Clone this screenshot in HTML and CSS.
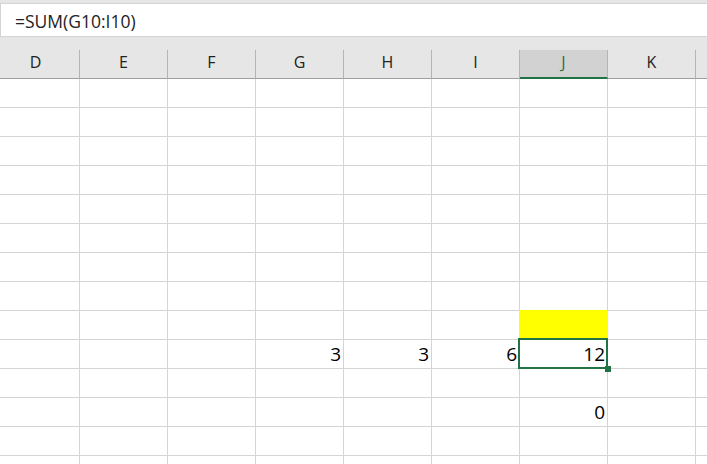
FILE: index.html
```html
<!DOCTYPE html>
<html lang="en">
<head>
    <meta charset="UTF-8">
    <title>Sheet</title>
    <link rel="stylesheet" href="styles.css">
</head>
<body>
    <div class="formula-bar">
        <div class="formula-input">=SUM(G10:I10)</div>
    </div>

    <div class="sheet">
        <div class="col-head">D</div>
        <div class="col-head">E</div>
        <div class="col-head">F</div>
        <div class="col-head">G</div>
        <div class="col-head">H</div>
        <div class="col-head">I</div>
        <div class="col-head active">J</div>
        <div class="col-head">K</div>
        <div class="col-head"></div>

        <!-- rows 1-8 -->
        <div class="cell"></div><div class="cell"></div><div class="cell"></div><div class="cell"></div><div class="cell"></div><div class="cell"></div><div class="cell"></div><div class="cell"></div><div class="cell"></div>
        <div class="cell"></div><div class="cell"></div><div class="cell"></div><div class="cell"></div><div class="cell"></div><div class="cell"></div><div class="cell"></div><div class="cell"></div><div class="cell"></div>
        <div class="cell"></div><div class="cell"></div><div class="cell"></div><div class="cell"></div><div class="cell"></div><div class="cell"></div><div class="cell"></div><div class="cell"></div><div class="cell"></div>
        <div class="cell"></div><div class="cell"></div><div class="cell"></div><div class="cell"></div><div class="cell"></div><div class="cell"></div><div class="cell"></div><div class="cell"></div><div class="cell"></div>
        <div class="cell"></div><div class="cell"></div><div class="cell"></div><div class="cell"></div><div class="cell"></div><div class="cell"></div><div class="cell"></div><div class="cell"></div><div class="cell"></div>
        <div class="cell"></div><div class="cell"></div><div class="cell"></div><div class="cell"></div><div class="cell"></div><div class="cell"></div><div class="cell"></div><div class="cell"></div><div class="cell"></div>
        <div class="cell"></div><div class="cell"></div><div class="cell"></div><div class="cell"></div><div class="cell"></div><div class="cell"></div><div class="cell"></div><div class="cell"></div><div class="cell"></div>
        <div class="cell"></div><div class="cell"></div><div class="cell"></div><div class="cell"></div><div class="cell"></div><div class="cell"></div><div class="cell"></div><div class="cell"></div><div class="cell"></div>

        <!-- row 9 -->
        <div class="cell"></div><div class="cell"></div><div class="cell"></div><div class="cell"></div><div class="cell"></div><div class="cell"></div><div class="cell yellow"></div><div class="cell"></div><div class="cell"></div>

        <!-- row 10 -->
        <div class="cell"></div><div class="cell"></div><div class="cell"></div>
        <div class="cell num">3</div>
        <div class="cell num">3</div>
        <div class="cell num">6</div>
        <div class="cell num selected">12</div>
        <div class="cell"></div><div class="cell"></div>

        <!-- row 11 -->
        <div class="cell"></div><div class="cell"></div><div class="cell"></div><div class="cell"></div><div class="cell"></div><div class="cell"></div><div class="cell"></div><div class="cell"></div><div class="cell"></div>

        <!-- row 12 -->
        <div class="cell"></div><div class="cell"></div><div class="cell"></div><div class="cell"></div><div class="cell"></div><div class="cell"></div>
        <div class="cell num">0</div>
        <div class="cell"></div><div class="cell"></div>

        <!-- rows 13-14 -->
        <div class="cell"></div><div class="cell"></div><div class="cell"></div><div class="cell"></div><div class="cell"></div><div class="cell"></div><div class="cell"></div><div class="cell"></div><div class="cell"></div>
        <div class="cell"></div><div class="cell"></div><div class="cell"></div><div class="cell"></div><div class="cell"></div><div class="cell"></div><div class="cell"></div><div class="cell"></div><div class="cell"></div>
    </div>
</body>
</html>
```

FILE: styles.css
```css
html, body {
    margin: 0;
    height: 100%;
    overflow: hidden;
    background: #fff;
    font-family: "Open Sans", "Noto Sans", sans-serif;
}
.formula-bar {
    height: 50px;
    box-sizing: border-box;
    padding-top: 3px;
    background: #e6e6e6;
}
.formula-input {
    height: 34px;
    box-sizing: border-box;
    background: #fff;
    border: 1px solid #d4d4d4;
    border-right: none;
    padding: 2px 0 0 14px;
    font-size: 17.5px;
    line-height: 31px;
    color: #222;
}
.sheet {
    display: grid;
    grid-template-columns: repeat(9, 88px);
    grid-auto-rows: 29px;
    margin-left: -8px;
}
.col-head {
    box-sizing: border-box;
    background: #e6e6e6;
    border-right: 1px solid #b4b4b4;
    border-bottom: 1px solid #9e9e9e;
    text-align: center;
    font-size: 16px;
    line-height: 24px;
    color: #222;
}
.col-head.active {
    background: #d2d2d2;
    border-bottom: 2px solid #217346;
    color: #217346;
}
.cell {
    box-sizing: border-box;
    border-right: 1px solid #d4d4d4;
    border-bottom: 1px solid #d4d4d4;
}
.num {
    text-align: right;
    padding-right: 2px;
    font-size: 19px;
    line-height: 28px;
    color: #000;
}
.yellow {
    background: #ffff00;
    border-color: #ffff00;
    box-shadow: -1px -1px 0 #ffff00;
}
.selected {
    position: relative;
}
.selected::after {
    content: "";
    position: absolute;
    top: -2px;
    left: -2px;
    right: -1px;
    bottom: -1px;
    border: 2px solid #217346;
}
.selected::before {
    content: "";
    position: absolute;
    right: -4px;
    bottom: -4px;
    width: 6px;
    height: 6px;
    background: #217346;
    z-index: 1;
}
```
